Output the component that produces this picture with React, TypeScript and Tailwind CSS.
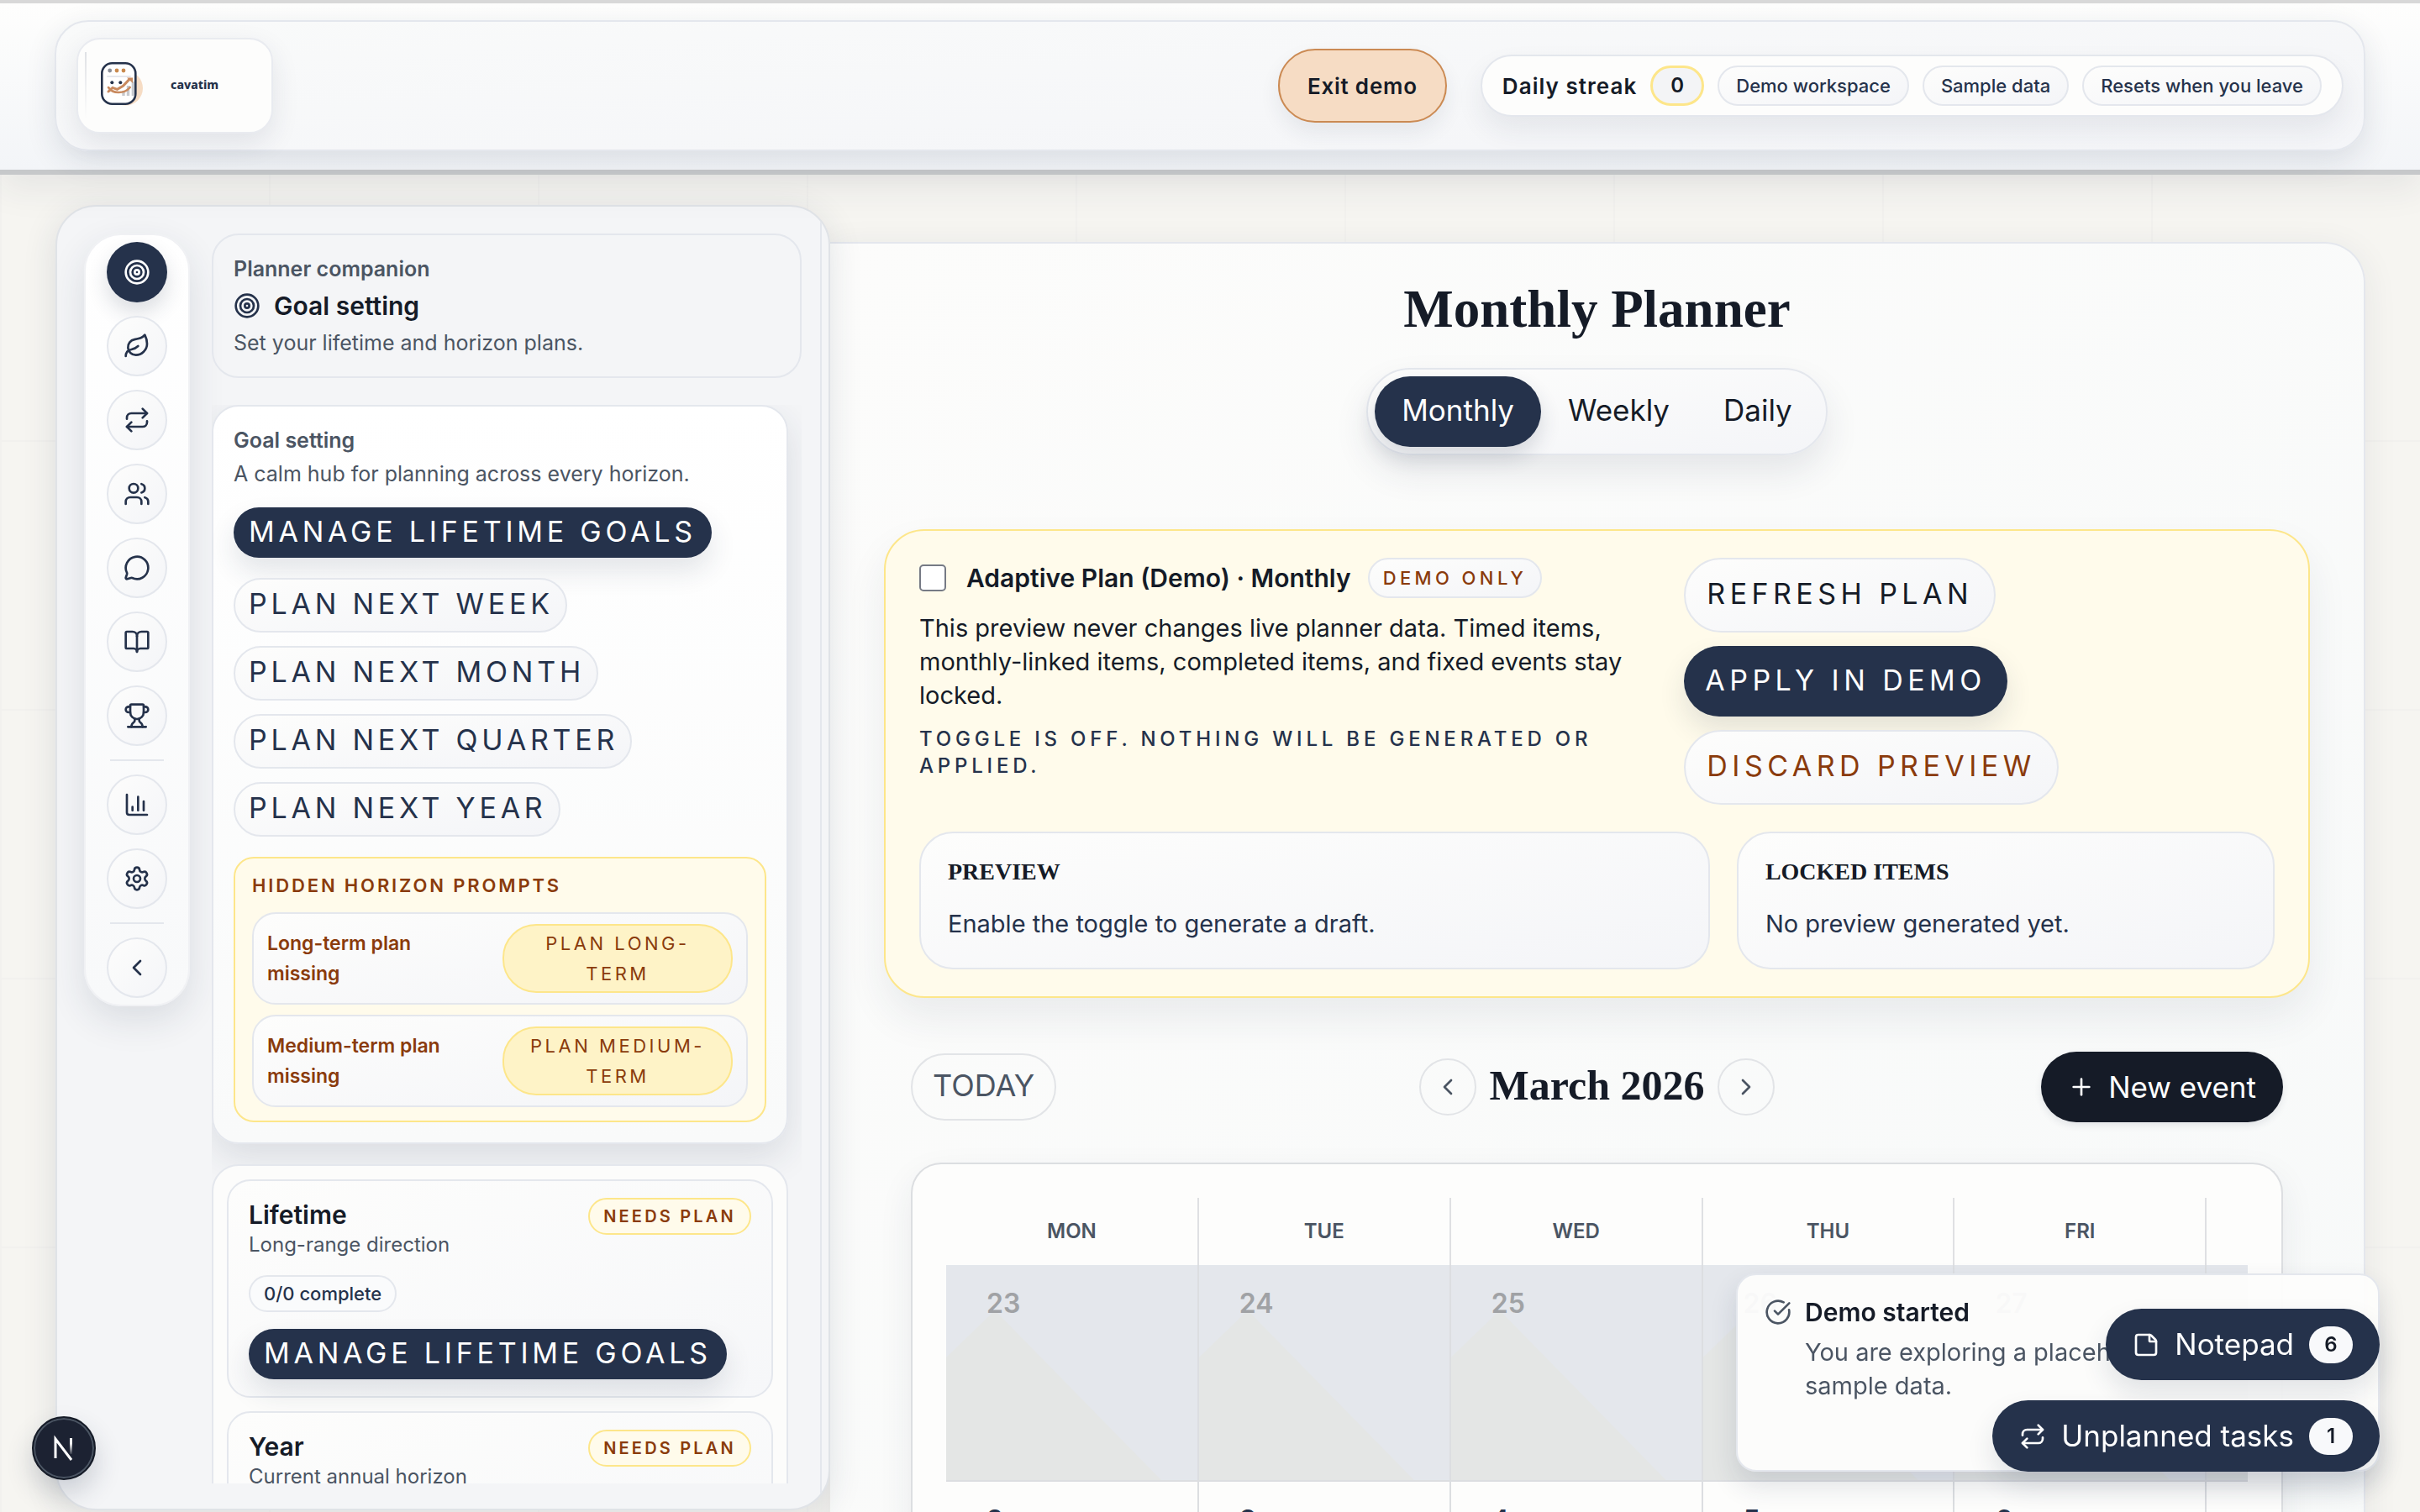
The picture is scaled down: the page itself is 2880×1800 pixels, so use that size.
import * as React from "react";
import {
  BookOpen,
  ChartColumn,
  ChevronLeft,
  ChevronRight,
  CircleCheckBig,
  Leaf,
  MessageCircle,
  Plus,
  Repeat,
  Settings,
  StickyNote,
  Target,
  Trophy,
  Users,
} from "lucide-react";
import { clsx } from "clsx";

const soft = "bg-linear-to-br from-[#fdfdfc] to-[#f4f5f8] border-2 border-[#e4e7ed]";
const navyShadow = "shadow-[0_16px_32px_rgba(37,50,75,0.12)]";

const railGroups = [
  [
    { label: "Goal setting", icon: Target, active: true },
    { label: "Reflection", icon: Leaf },
    { label: "Routines", icon: Repeat },
    { label: "People", icon: Users },
    { label: "Messages", icon: MessageCircle },
    { label: "Journal", icon: BookOpen },
    { label: "Achievements", icon: Trophy },
  ],
  [
    { label: "Insights", icon: ChartColumn },
    { label: "Settings", icon: Settings },
  ],
  [{ label: "Collapse", icon: ChevronLeft }],
];

const days = ["MON", "TUE", "WED", "THU", "FRI", "SAT", "SUN"];
const weeks = [
  [23, 24, 25, 26, 27, 28, 1],
  [2, 3, 4, 5, 6, 7, 8],
];

function Logo() {
  return (
    <svg viewBox="0 0 52 60" className="h-[60px] w-[52px]" aria-hidden="true">
      <circle cx="30.5" cy="33" r="20.5" fill="#f6dcc4" />
      <rect x="2.3" y="3.3" width="40" height="48.4" rx="12" fill="#fff" stroke="#25324b" strokeWidth="2.6" />
      <circle cx="11.7" cy="12" r="2.4" fill="#8b8f98" />
      <circle cx="20" cy="12" r="2.4" fill="#c98a4f" />
      <circle cx="28" cy="12" r="2.4" fill="#c98a4f" />
      <path d="M8.3 19h28.4" stroke="#e4e7ed" strokeWidth="2" />
      <path d="M28 42v-6M33.5 42V30M39.4 42V25" stroke="#b9bcc2" strokeOpacity="0.8" strokeWidth="3.4" />
      <circle cx="14.3" cy="26.3" r="2" fill="#25324b" />
      <circle cx="24.3" cy="26.3" r="2" fill="#25324b" />
      <path d="M10 37l5-4.6 5.5 2 7-4 7.5-8" fill="none" stroke="#c98a5f" strokeWidth="3" strokeLinecap="round" />
      <path d="M32 20.5h7V27z" fill="#c98a5f" />
      <path d="M10 32c5 8 19 8 25.7 0" fill="none" stroke="#c98a5f" strokeWidth="2.6" strokeLinecap="round" />
    </svg>
  );
}

function Header() {
  return (
    <header className="relative z-20 shrink-0 border-t-4 border-b-6 border-t-[#d8d8d8] border-b-[#c6c8ca] bg-linear-to-b from-[#fefefd] to-[#f3f5f8] px-[65px] pt-5 pb-[22px] shadow-[0_16px_40px_rgba(37,50,75,0.08)]">
      <div className="flex h-[156px] items-center justify-between rounded-[40px] border-2 border-[#e4e7ed] bg-linear-to-br from-[#f9fafa] to-[#f4f5f8] px-6 shadow-[0_12px_36px_rgba(37,50,75,0.12)]">
        <a href="#" className="flex h-[114px] w-[234px] items-center rounded-[28px] border-2 border-[#e9ebf0] bg-[#fdfdfc] pl-2 shadow-[0_12px_32px_rgba(37,50,75,0.1)]">
          <span className="mr-4 h-20 w-[2px] bg-linear-to-b from-[#dfe1e5] to-transparent" />
          <Logo />
          <span className="ml-8 pb-1 font-['Noto_Sans'] text-[14px] font-extrabold text-[#25324b]">cavatim</span>
        </a>
        <div className="flex items-center gap-10">
          <button type="button" className="h-[88px] rounded-full border-2 border-[#cb8a53] bg-[#f6dcc4] px-[33px] text-[26px] font-semibold tracking-[0.03em] shadow-[0_12px_24px_rgba(37,50,75,0.08)]">
            Exit demo
          </button>
          <div className="flex h-[74px] items-center gap-4 rounded-full border-2 border-[#e4e7ed] bg-[#fdfdfc] px-6 shadow-[0_16px_32px_rgba(37,50,75,0.08)]">
            <span className="text-[26px] font-semibold tracking-[0.04em]">Daily streak</span>
            <span className="flex h-12 w-16 items-center justify-center rounded-full border-3 border-[#fde68a] bg-[#f3f4f6] text-[24px] font-semibold">0</span>
            {["Demo workspace", "Sample data", "Resets when you leave"].map((t) => (
              <span key={t} className={clsx(soft, "flex h-12 items-center rounded-full px-5 text-[22px] font-medium text-[#25324b]")}>{t}</span>
            ))}
          </div>
        </div>
      </div>
    </header>
  );
}

function Rail() {
  return (
    <nav className="flex w-[126px] shrink-0 flex-col items-center gap-4 self-start rounded-[44px] border-2 border-[#f0f1f4] bg-linear-to-b from-white to-[#f8f9fa] py-2 shadow-[0_16px_44px_rgba(37,50,75,0.12)]">
      {railGroups.map((group, g) => (
        <React.Fragment key={g}>
          {g > 0 && <div className="h-[2px] w-16 bg-[#e4e7ed]" />}
          {group.map(({ label, icon: Icon, active }: { label: string; icon: typeof Target; active?: boolean }) => (
            <button key={label} type="button" aria-label={label}
              className={clsx("flex size-[72px] items-center justify-center rounded-full", active ? "bg-[#25324b] text-white shadow-[0_12px_24px_rgba(37,50,75,0.16)]" : [soft, "text-[#25324b]"])}>
              <Icon size={32} strokeWidth={2} />
            </button>
          ))}
        </React.Fragment>
      ))}
    </nav>
  );
}

function ManageButton() {
  return (
    <button type="button" className={clsx(navyShadow, "flex h-[60px] items-center self-start rounded-full bg-[#25324b] px-[18px] pb-1 text-[34px] tracking-[0.14em] text-white")}>
      MANAGE LIFETIME GOALS
    </button>
  );
}

function HorizonCard({ title, text }: { title: string; text: string }) {
  return (
    <section className="flex flex-col rounded-[28px] border-2 border-[#e4e7ed] bg-linear-to-br from-[#fdfdfc] to-[#f6f7f9] px-6 py-5">
      <div className="flex items-start justify-between">
        <div>
          <h3 className="text-[30px] leading-[40px] font-semibold">{title}</h3>
          <p className="text-[24px] leading-8 text-[#4b5563]">{text}</p>
        </div>
        <span className="flex h-11 items-center rounded-full border-2 border-[#fde68a] bg-[#fffbeb] px-4 text-[20px] font-semibold tracking-[0.16em] text-[#8a3b0c]">NEEDS PLAN</span>
      </div>
      <span className="mt-5 flex h-11 items-center self-start rounded-full border-2 border-[#e4e7ed] bg-[#fafbfc] px-4 text-[22px] font-medium text-[#25324b]">0/0 complete</span>
      <div className="mt-5 flex">
        <ManageButton />
      </div>
    </section>
  );
}

function Sidebar() {
  return (
    <aside className="relative z-10 mt-9 mb-[2px] w-[922px] shrink-0 overflow-hidden rounded-[48px] border-2 border-[#e0e3e7] bg-[#f4f5f7] pr-2 shadow-[0_8px_40px_rgba(37,50,75,0.12)]">
      <div className="flex h-full gap-[26px] border-r-2 border-[#e4e7ed] pt-8 pr-[22px] pb-[30px] pl-8">
        <Rail />
        <div className="flex min-w-0 flex-1 flex-col gap-8">
          <div className="shrink-0 rounded-[32px] border-2 border-[#e4e7ed] p-6">
            <p className="text-[25px] leading-8 font-semibold text-[#4b5563]">Planner companion</p>
            <h2 className="mt-2 flex items-center gap-4 text-[30px] leading-10 font-semibold">
              <Target size={32} strokeWidth={2} className="text-[#25324b]" />
              Goal setting
            </h2>
            <p className="mt-2 text-[25px] leading-8 text-[#4b5563]">Set your lifetime and horizon plans.</p>
          </div>

          <div className="flex min-h-0 flex-1 flex-col gap-6 overflow-hidden pr-4">
            <section className="flex shrink-0 flex-col rounded-[32px] border-2 border-[#e4e7ed] bg-linear-to-b from-white to-[#f9fafa] p-6 shadow-[0_16px_44px_rgba(37,50,75,0.12)]">
              <h3 className="text-[25px] leading-8 font-semibold text-[#4b5563]">Goal setting</h3>
              <p className="mt-2 mb-6 text-[25px] leading-8 text-[#4b5563]">A calm hub for planning across every horizon.</p>
              <ManageButton />
              <div className="mt-6 mb-6 flex flex-col items-start gap-4">
                {["WEEK", "MONTH", "QUARTER", "YEAR"].map((h) => (
                  <button key={h} type="button" className={clsx(soft, "flex h-[65px] items-center rounded-full pr-[14px] pb-1 pl-4 text-[34px] tracking-[0.14em] text-[#25324b]")}>
                    PLAN NEXT {h}
                  </button>
                ))}
              </div>
              <div className="flex flex-col gap-3 rounded-[24px] border-2 border-[#fde68a] bg-[#fffbeb] px-5 pt-4 pb-4 text-[#8a3b0c]">
                <h4 className="mb-1 text-[22px] leading-8 font-semibold tracking-[0.13em]">HIDDEN HORIZON PROMPTS</h4>
                {["Long", "Medium"].map((h) => (
                  <div key={h} className={clsx(soft, "flex h-[110px] items-center justify-between rounded-[28px] px-4")}>
                    <p className="w-[230px] text-[23px] leading-9 font-semibold">{h}-term plan missing</p>
                    <button type="button" className="w-[274px] rounded-[40px] border-2 border-[#fde68a] bg-[#fef3c7] px-6 py-[3px] text-[22px] leading-9 tracking-[0.16em] uppercase">
                      Plan {h}-term
                    </button>
                  </div>
                ))}
              </div>
            </section>

            <section className="flex shrink-0 flex-col gap-4 rounded-t-[32px] border-2 border-[#e4e7ed] bg-[#fcfcfb] p-4">
              <HorizonCard title="Lifetime" text="Long-range direction" />
              <HorizonCard title="Year" text="Current annual horizon" />
            </section>
          </div>
        </div>
      </div>
    </aside>
  );
}

function AdaptivePlan() {
  return (
    <section className="flex flex-col gap-8 rounded-[48px] border-2 border-[#fde68a] bg-[#fffbeb] px-10 py-8 shadow-[0_24px_48px_rgba(37,50,75,0.08)]">
      <div className="grid grid-cols-[1.25fr_1fr] gap-8">
        <div>
          <div className="flex items-center gap-5">
            <label className="flex items-center gap-6 text-[30px] font-semibold">
              <input type="checkbox" className="size-8 appearance-none rounded-[5px] border-2 border-[#767a85] bg-white checked:bg-[#25324b]" />
              Adaptive Plan (Demo) · Monthly
            </label>
            <span className={clsx(soft, "flex h-12 items-center rounded-full px-4 text-[22px] font-medium tracking-[0.2em] text-[#8a3b0c]")}>DEMO ONLY</span>
          </div>
          <p className="mt-4 text-[29px] leading-10">
            This preview never changes live planner data. Timed items, monthly-linked items, completed items, and fixed events stay locked.
          </p>
          <p className="mt-4 text-[24px] leading-8 font-medium tracking-[0.2em] text-[#25324b]">TOGGLE IS OFF. NOTHING WILL BE GENERATED OR APPLIED.</p>
        </div>
        <div className="flex flex-col items-start gap-4 text-[34px] tracking-[0.16em]">
          <button type="button" className={clsx(soft, "h-[89px] rounded-full px-[25px] pb-1")}>REFRESH PLAN</button>
          <button type="button" className={clsx(navyShadow, "h-[84px] rounded-full bg-[#25324b] px-[25px] pb-1 text-white")}>APPLY IN DEMO</button>
          <button type="button" className={clsx(soft, "h-[89px] rounded-full px-[25px] pb-1 text-[#8a3b0c]")}>DISCARD PREVIEW</button>
        </div>
      </div>
      <div className="grid grid-cols-[1.47fr_1fr] gap-8">
        {[
          ["PREVIEW", "Enable the toggle to generate a draft."],
          ["LOCKED ITEMS", "No preview generated yet."],
        ].map(([title, text]) => (
          <div key={title} className={clsx(soft, "rounded-[40px] px-8 pt-7 pb-8")}>
            <h3 className="font-['Liberation_Serif',serif] text-[28px] leading-9 font-bold">{title}</h3>
            <p className="mt-6 text-[29px] leading-10 text-[#25324b]">{text}</p>
          </div>
        ))}
      </div>
    </section>
  );
}

function Calendar() {
  return (
    <div className="mt-12 rounded-t-[36px] border-2 border-b-0 border-[#dcdee1] bg-[#fdfdfc] px-10 pt-10 shadow-[0_16px_40px_rgba(37,50,75,0.08)]">
      <div className="overflow-hidden rounded-t-[32px]">
        <table className="w-[2100px] table-fixed border-collapse">
          <thead>
            <tr>
              {days.map((d) => (
                <th key={d} className="h-20 border-r-2 border-[#dfe0e3] text-[24px] font-semibold text-[#4b5563]">{d}</th>
              ))}
            </tr>
          </thead>
          <tbody>
            {weeks.map((week, w) => (
              <tr key={w}>
                {week.map((n) => (
                  <td key={n} className={clsx("relative h-[257px] border-r-2 border-b-2 border-[#dcdee1] pt-[26px] pl-12 align-top text-[32px] leading-10 font-semibold", w === 0 ? "bg-[#e4e7ec] text-[#a0a2a5]" : "text-[#25324b]")}>
                    {w === 0 && <span className="absolute inset-0 bg-[#e4e6e5] [clip-path:polygon(0_110px,58px_54px,256px_100%,0_100%)]" />}
                    <span className="relative">{n}</span>
                  </td>
                ))}
              </tr>
            ))}
          </tbody>
        </table>
      </div>
    </div>
  );
}

function Planner() {
  const [view, setView] = React.useState("Monthly");

  return (
    <main className="mt-20 min-w-0 flex-1 self-start rounded-tr-[48px] border-t-2 border-r-2 border-[#e4e7ed] bg-linear-to-br from-[#fcfcfb] to-[#f7f9f9] px-16 shadow-[0_8px_40px_rgba(37,50,75,0.08)]">
      <h1 className="pt-[38px] text-center font-['Liberation_Serif',serif] text-[63px] leading-20 font-bold">Monthly Planner</h1>
      <div className="mt-[30px] flex justify-center">
        <div className={clsx(soft, "flex rounded-full p-2 shadow-[0_20px_40px_rgba(37,50,75,0.1)]")}>
          {["Monthly", "Weekly", "Daily"].map((v) => (
            <button key={v} type="button" onClick={() => setView(v)}
              className={clsx("h-[84px] rounded-full px-8 pb-1 text-[35px]", v === view && "bg-[#25324b] text-white shadow-[0_12px_24px_rgba(37,50,75,0.16)]")}>
              {v}
            </button>
          ))}
        </div>
      </div>
      <div className="mt-[88px]">
        <AdaptivePlan />
      </div>
      <div className="mt-16 px-8">
        <div className="grid grid-cols-[1fr_auto_1fr] items-center">
          <button type="button" className="h-20 justify-self-start rounded-full border-2 border-[#e2e4e7] px-6 pb-1 text-[36px] text-[#4b5563]">TODAY</button>
          <div className="flex items-center gap-4">
            <button type="button" aria-label="Previous month" className="flex size-[68px] items-center justify-center rounded-full border-2 border-[#e2e4e7] text-[#4b5563]"><ChevronLeft size={32} strokeWidth={2} /></button>
            <h2 className="pb-1 font-['Liberation_Serif',serif] text-[50px] leading-[60px] font-bold">March 2026</h2>
            <button type="button" aria-label="Next month" className="flex size-[68px] items-center justify-center rounded-full border-2 border-[#e2e4e7] text-[#4b5563]"><ChevronRight size={32} strokeWidth={2} /></button>
          </div>
          <button type="button" className="flex h-[84px] items-center gap-4 justify-self-end rounded-full bg-[#151b27] px-8 text-[35px] text-white shadow-[0_4px_8px_rgba(37,50,75,0.1)]">
            <Plus size={32} strokeWidth={2} />
            New event
          </button>
        </div>
        <Calendar />
      </div>
    </main>
  );
}

function FloatingPanels() {
  return (
    <>
      <div role="status" className="fixed right-12 bottom-12 z-30 flex h-[236px] w-[766px] gap-4 rounded-[24px] border-2 border-[#e4e7ed] bg-[#fdfdfc]/95 pt-7 pl-8 shadow-[0_16px_32px_rgba(37,50,75,0.14)]">
        <CircleCheckBig size={32} strokeWidth={2} className="shrink-0 text-[#4b5563]" />
        <div>
          <p className="text-[30px] leading-8 font-semibold">Demo started</p>
          <p className="mt-3 w-[680px] text-[29px] leading-10 text-[#4b5563]">You are exploring a placeholder workspace with sample data.</p>
        </div>
      </div>
      <div className="fixed right-12 bottom-12 z-40 flex flex-col items-end gap-6 text-[35px] text-white">
        {[
          { label: "Notepad", count: 6, icon: StickyNote },
          { label: "Unplanned tasks", count: 1, icon: Repeat },
        ].map(({ label, count, icon: Icon }) => (
          <button key={label} type="button" className={clsx(navyShadow, "flex h-[85px] items-center gap-[18px] rounded-full bg-[#25324b] px-8")}>
            <Icon size={32} strokeWidth={2} />
            {label}
            <span className="flex h-11 w-[52px] items-center justify-center rounded-full bg-[#f8f9fb] text-[24px] font-semibold text-[#151b27]">{count}</span>
          </button>
        ))}
      </div>
      <button type="button" aria-label="Open dev tools" className="fixed bottom-[38px] left-[38px] z-40 flex size-[76px] items-center justify-center rounded-full border-2 border-[#151b27] bg-[#1c2232] shadow-[0_0_0_2px_#4b5563_inset,0_16px_32px_rgba(37,50,75,0.2)]">
        <svg viewBox="0 0 32 32" className="size-8" fill="none" aria-hidden="true">
          <defs>
            <linearGradient id="fade" x1="0" y1="0" x2="0" y2="1">
              <stop offset="0.3" stopColor="#fff" />
              <stop offset="1" stopColor="#fff" stopOpacity="0.1" />
            </linearGradient>
          </defs>
          <path d="M6 28V5l19 25" stroke="#fff" strokeWidth="3" />
          <rect x="23" y="4" width="3" height="19" fill="url(#fade)" />
        </svg>
      </button>
    </>
  );
}

export default function App() {
  return (
    <div className="flex h-screen flex-col overflow-hidden bg-[#f6f5f1] font-['Inter',sans-serif] text-[#151b27]">
      <Header />
      <div className="flex min-h-0 flex-1 bg-[linear-gradient(90deg,#f2f1ee_2px,transparent_2px),linear-gradient(#f2f1ee_2px,transparent_2px)] bg-size-[320px_320px] bg-position-[0_-4px] pr-[65px] pl-[66px]">
        <Sidebar />
        <Planner />
      </div>
      <FloatingPanels />
    </div>
  );
}
